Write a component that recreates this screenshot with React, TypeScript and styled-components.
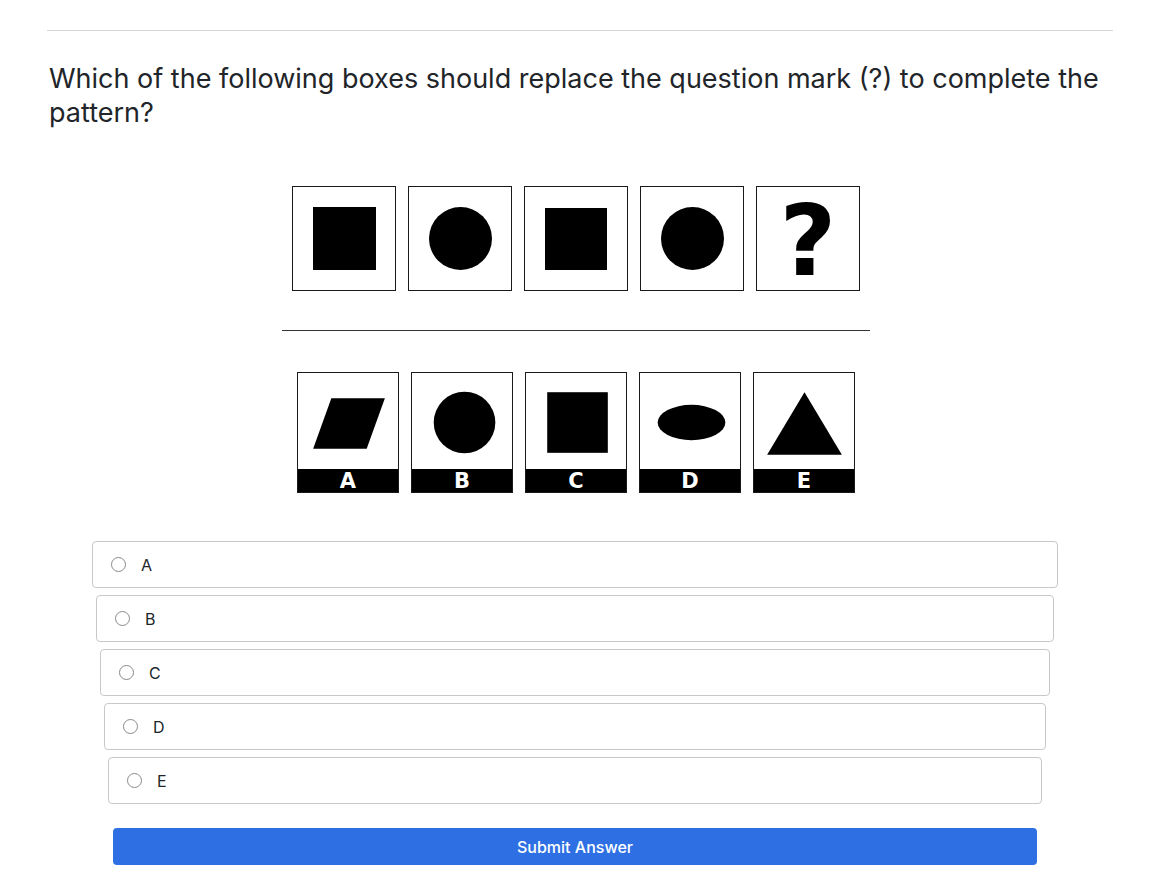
import React from 'react';
import styled, { createGlobalStyle } from 'styled-components';

const GlobalStyle = createGlobalStyle`
  html, body {
    margin: 0;
    padding: 0;
    background: #ffffff;
  }
  body {
    font-family: Inter, 'Liberation Sans', Arial, sans-serif;
    color: #212529;
  }
`;

const Page = styled.div`
  box-sizing: border-box;
  width: 1168px;
  padding: 30px 55px 0 47px;
`;

const Rule = styled.hr`
  margin: 0;
  border: 0;
  border-top: 1px solid #d6d6d6;
`;

const Question = styled.h2`
  margin: 31px 0 0 2px;
  max-width: 1062px;
  font-family: Inter, 'Liberation Sans', Arial, sans-serif;
  font-size: 27px;
  line-height: 34px;
  font-weight: 400;
  color: #212529;
`;

const Figure = styled.div`
  width: 588px;
  margin: 56px 0 0 235px;
  display: flex;
  flex-direction: column;
  align-items: center;
`;

const ShapeRow = styled.div<{ $gap: number }>`
  display: flex;
  gap: ${(p) => p.$gap}px;
`;

const SequenceBox = styled.div`
  box-sizing: border-box;
  width: 104px;
  height: 105px;
  border: 1.5px solid #1a1a1a;
  display: flex;
  align-items: center;
  justify-content: center;
`;

const QuestionGlyph = styled.span`
  font-family: 'DejaVu Sans', 'Liberation Sans', sans-serif;
  font-weight: 700;
  font-size: 98px;
  line-height: 1;
  color: #000;
  margin-top: 4px;
`;

const Divider = styled.div`
  width: 100%;
  height: 1px;
  background: #333;
  margin: 39px 0 41px;
`;

const ChoiceBox = styled.div`
  box-sizing: border-box;
  width: 102px;
  height: 121px;
  border: 1.5px solid #1a1a1a;
  display: flex;
  flex-direction: column;
`;

const ChoiceArt = styled.svg`
  display: block;
  flex: 1;
`;

const ChoiceLabel = styled.div`
  height: 23px;
  background: #000;
  color: #fff;
  font-family: 'DejaVu Sans', 'Liberation Sans', sans-serif;
  font-weight: 700;
  font-size: 21px;
  line-height: 24px;
  text-align: center;
`;

const Options = styled.div`
  margin-top: 48px;
  display: flex;
  flex-direction: column;
  gap: 7px;
`;

const OptionRow = styled.label<{ $inset: number }>`
  box-sizing: border-box;
  height: 47px;
  margin: 0 ${(p) => 55 + p.$inset}px 0 ${(p) => 45 + p.$inset}px;
  border: 1px solid #c8c8c8;
  border-radius: 4px;
  display: flex;
  align-items: center;
  padding-left: 18px;
  gap: 15px;
  font-size: 16px;
  color: #212529;
  cursor: pointer;
`;

const Radio = styled.span`
  box-sizing: border-box;
  width: 15px;
  height: 15px;
  border-radius: 50%;
  border: 1px solid #8a8a8a;
  background: #fff;
`;

const SubmitButton = styled.button`
  display: block;
  box-sizing: border-box;
  width: 924px;
  height: 37px;
  margin: 24px 0 0 66px;
  border: 0;
  border-radius: 4px;
  background: #2e70e3;
  color: #fff;
  font-family: Inter, 'Liberation Sans', Arial, sans-serif;
  font-size: 16px;
  font-weight: 500;
  cursor: pointer;
`;

const Square = ({ size }: { size: number }) => (
  <svg width={size} height={size} viewBox="0 0 10 10">
    <rect width="10" height="10" fill="#000" />
  </svg>
);

const Disc = ({ size }: { size: number }) => (
  <svg width={size} height={size} viewBox="0 0 10 10">
    <circle cx="5" cy="5" r="5" fill="#000" />
  </svg>
);

const choices = [
  { label: 'A', art: <polygon points="33,25 86,25 68,75 15,75" fill="#000" /> },
  { label: 'B', art: <circle cx="52" cy="49" r="30.5" fill="#000" /> },
  { label: 'C', art: <rect x="21" y="19" width="60" height="60" fill="#000" /> },
  { label: 'D', art: <ellipse cx="51" cy="49" rx="33.5" ry="17.5" fill="#000" /> },
  { label: 'E', art: <polygon points="50,19 87,81 13,81" fill="#000" /> },
];

export default function App() {
  return (
    <>
      <GlobalStyle />
      <Page>
        <Rule />
        <Question>
          Which of the following boxes should replace the question mark (?) to complete the
          pattern?
        </Question>

        <Figure>
          <ShapeRow $gap={12}>
            <SequenceBox><Square size={63} /></SequenceBox>
            <SequenceBox><Disc size={63} /></SequenceBox>
            <SequenceBox><Square size={62} /></SequenceBox>
            <SequenceBox><Disc size={63} /></SequenceBox>
            <SequenceBox><QuestionGlyph>?</QuestionGlyph></SequenceBox>
          </ShapeRow>
          <Divider />
          <ShapeRow $gap={12}>
            {choices.map((c) => (
              <ChoiceBox key={c.label}>
                <ChoiceArt viewBox="0 0 99 95">{c.art}</ChoiceArt>
                <ChoiceLabel>{c.label}</ChoiceLabel>
              </ChoiceBox>
            ))}
          </ShapeRow>
        </Figure>

        <Options>
          {choices.map((c, i) => (
            <OptionRow key={c.label} $inset={i * 4}>
              <Radio />
              {c.label}
            </OptionRow>
          ))}
        </Options>

        <SubmitButton type="button">Submit Answer</SubmitButton>
      </Page>
    </>
  );
}
